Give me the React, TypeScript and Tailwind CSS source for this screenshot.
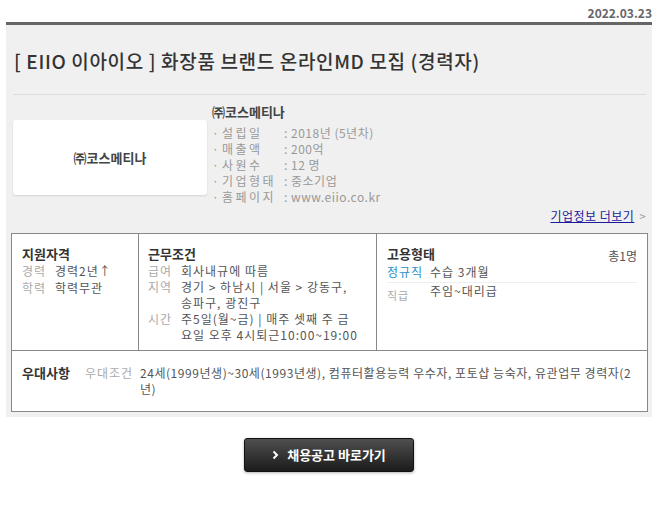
import React from "react";

const F = "font-['Noto_Sans_CJK_KR','Noto_Sans',sans-serif]";

function InfoRow({ label, value }: { label: string; value: string }) {
  return (
    <div className="flex h-[16px] items-center text-[12px] leading-[16px] text-[#999]">
      <span className="w-[10px] text-[#999]">·</span>
      <span className="w-[62px] tracking-[2.5px] text-[#999]">{label}</span>
      <span className="tracking-[0.5px] text-[#999]">: {value}</span>
    </div>
  );
}

function Item({ label, children }: { label: string; children: React.ReactNode }) {
  return (
    <div className="flex text-[12px] leading-[16px] tracking-[1px]">
      <span className="w-[33px] shrink-0 text-[#aaa]">{label}</span>
      <span className="text-[#555]">{children}</span>
    </div>
  );
}

export default function App() {
  return (
    <div className={`${F} w-[658px] h-[517px] bg-white`}>
      <div className="flex h-[22px] items-center justify-end pr-[6px] pt-[4px] text-[12px] font-bold text-[#666]">
        2022.03.23
      </div>
      <div className="mx-[6px] border-t-[3px] border-[#666] bg-[#f0f0f0] px-[5px] pb-[5px]">
        <div className="ml-[2px] mr-[1px] border-b border-[#dcdcdc] pt-[23px] pb-[21px] pl-[1px] text-[19px] leading-[25px] tracking-[0.65px] font-medium text-[#333]">
          [ EIIO 이아이오 ] 화장품 브랜드 온라인MD 모집 (경력자)
        </div>
        <div className="flex pl-[2px] pt-[8px]">
          <div className="mt-[17px] flex h-[75px] w-[194px] items-center justify-center rounded-[3px] bg-white text-[13px] font-bold text-[#444] shadow-[0_1px_2px_rgba(0,0,0,0.12)]">
            ㈜코스메티나
          </div>
          <div className="ml-[5px] flex flex-col">
            <div className="h-[18px] text-[13px] leading-[18px] font-bold text-[#444]">㈜코스메티나</div>
            <div className="mt-[4px] flex flex-col">
              <InfoRow label="설립일" value="2018년 (5년차)" />
              <InfoRow label="매출액" value="200억" />
              <InfoRow label="사원수" value="12 명" />
              <InfoRow label="기업형태" value="중소기업" />
              <InfoRow label="홈페이지" value="www.eiio.co.kr" />
            </div>
          </div>
        </div>
        <div className="flex h-[22px] items-center justify-end pr-[1px] text-[12px] tracking-[0.5px]">
          <span className="text-[#1a1a9a] underline">기업정보 더보기</span>
          <span className="ml-[5px] text-[11px] text-[#999]">&gt;</span>
        </div>
        <div className="mt-[6px] w-[637px] border border-[#888] bg-white">
          <div className="flex h-[117px] border-b border-[#888]">
            <div className="w-[127px] shrink-0 border-r border-[#888] pl-[10px] pt-[11px]">
              <div className="mb-[1px] text-[13px] leading-[17px] font-bold text-[#333]">지원자격</div>
              <Item label="경력">경력2년↑</Item>
              <div className="h-[1px]" />
              <Item label="학력">학력무관</Item>
            </div>
            <div className="w-[238px] shrink-0 border-r border-[#888] pl-[9px] pt-[11px]">
              <div className="mb-[1px] text-[13px] leading-[17px] font-bold text-[#333]">근무조건</div>
              <Item label="급여">회사내규에 따름</Item>
              <Item label="지역">
                경기 &gt; 하남시 | 서울 &gt; 강동구,
                <br />
                송파구, 광진구
              </Item>
              <Item label="시간">
                주5일(월~금) | 매주 셋째 주 금
                <br />
                요일 오후 4시퇴근10:00~19:00
              </Item>
            </div>
            <div className="flex-1 pl-[10px] pr-[10px] pt-[11px]">
              <div className="flex items-start justify-between">
                <div className="mb-[1px] text-[13px] leading-[17px] font-bold text-[#333]">고용형태</div>
                <div className="mt-[2px] text-[12px] leading-[17px] text-[#555]">총1명</div>
              </div>
              <div className="flex border-b border-[#eee] pb-[2px] text-[12px] leading-[16px] tracking-[1px]">
                <span className="w-[43px] text-[#2a8fc8]">정규직</span>
                <span className="text-[#555]">수습 3개월</span>
              </div>
              <div className="flex text-[12px] leading-[16px] tracking-[1px]">
                <span className="mt-[4px] w-[43px] text-[11px] text-[#aaa]">직급</span>
                <span className="text-[#555]">주임~대리급</span>
              </div>
            </div>
          </div>
          <div className="flex h-[60px] pl-[10px] pt-[13px]">
            <div className="w-[63px] shrink-0 text-[13px] leading-[17px] font-bold text-[#333]">우대사항</div>
            <div className="mt-[1px] w-[55px] shrink-0 text-[12px] leading-[16px] tracking-[1px] text-[#aaa]">우대조건</div>
            <div className="mt-[1px] whitespace-nowrap text-[12px] leading-[16px] tracking-[0.55px] text-[#555]">
              <div>24세(1999년생)~30세(1993년생), 컴퓨터활용능력 우수자, 포토샵 능숙자, 유관업무 경력자(2</div>
              <div>년)</div>
            </div>
          </div>
        </div>
      </div>
      <div className="flex justify-center pt-[21px]">
        <div className="flex h-[34px] w-[170px] items-center justify-center gap-[8px] rounded-[3px] border border-[#111] bg-gradient-to-b from-[#505050] to-[#1c1c1c] text-[13px] font-bold text-white shadow-[0_1px_3px_rgba(0,0,0,0.3)]">
          <svg width="7" height="10" viewBox="0 0 7 10">
            <path d="M1.5 1.5 L5 5 L1.5 8.5" stroke="white" strokeWidth="2" fill="none" />
          </svg>
          <span>채용공고 바로가기</span>
        </div>
      </div>
    </div>
  );
}
